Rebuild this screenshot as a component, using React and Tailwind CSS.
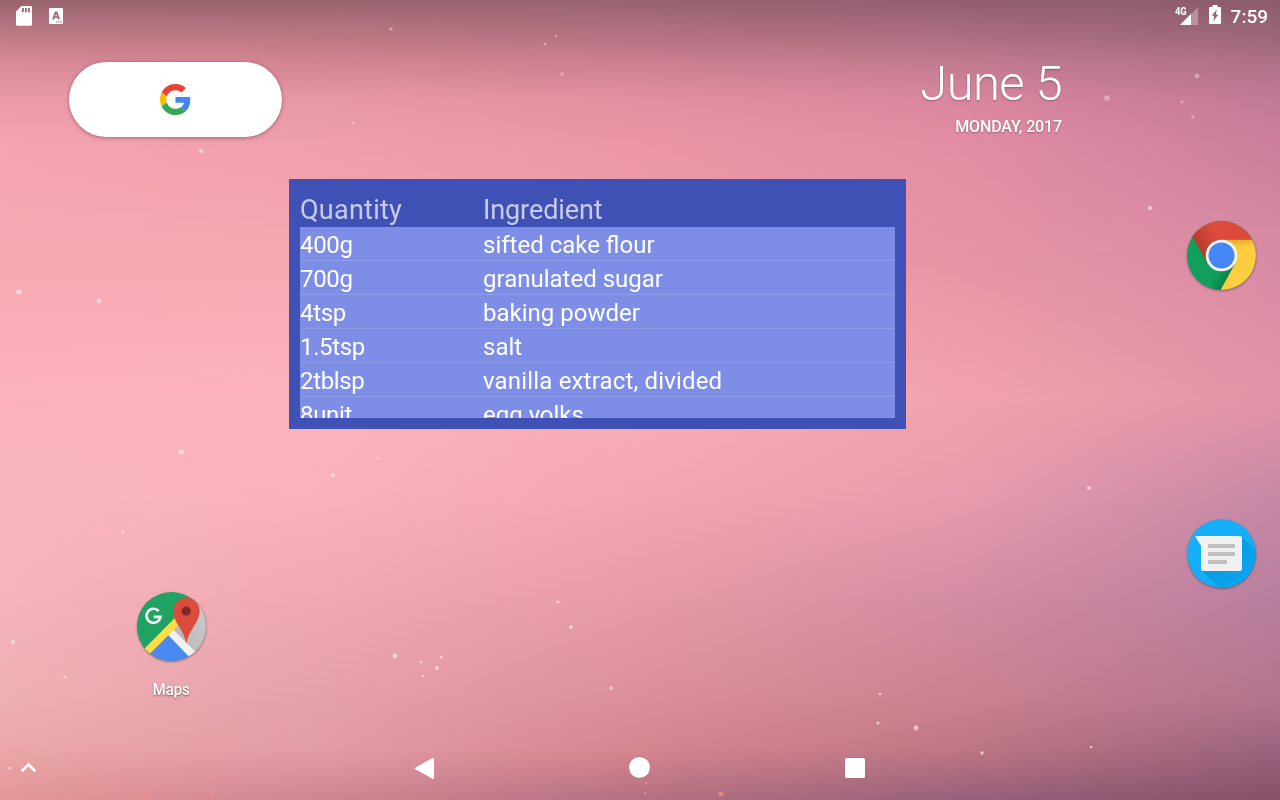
import React from "react";

/* Wallpaper colours: one entry per horizontal band, five stops across. */
const BANDS = [
  { y: 0, c: ["#98646f", "#99646f", "#97636f", "#935f6f", "#8b5c6c"] },
  { y: 32, c: ["#bb7884", "#b97581", "#b27080", "#aa6c7f", "#9a6578"] },
  { y: 64, c: ["#da8b98", "#d38691", "#cd8092", "#c37c90", "#b07189"] },
  { y: 100, c: ["#ec9aa8", "#e998a6", "#e48fa2", "#da879e", "#c27a97"] },
  { y: 150, c: ["#f6a4b0", "#f19fac", "#ec96a7", "#e38ea4", "#cc809d"] },
  { y: 250, c: ["#f8a9b2", "#f7a8b1", "#f09eab", "#e893a6", "#d78ba4"] },
  { y: 400, c: ["#fbb2bb", "#fcb4bc", "#f9aeb6", "#f3a2ad", "#e393a8"] },
  { y: 500, c: ["#fab6bf", "#f9b1ba", "#f3a6b1", "#e89bad", "#c588a5"] },
  { y: 600, c: ["#f5b3bb", "#f0a8b1", "#e79ba7", "#d48ca2", "#b87f9e"] },
  { y: 700, c: ["#eeb0b2", "#e6a0a8", "#da8f9a", "#cb8190", "#b2748d"] },
  { y: 750, c: ["#eba7a9", "#e39ca4", "#d5868f", "#bf7685", "#9a637d"] },
  { y: 800, c: ["#e39798", "#cf8591", "#b46f82", "#96607a", "#865068"] },
];

const STARS = [
  [391, 29, 1.8], [545, 44, 1.6], [556, 36, 1.3], [353, 123, 1.6], [201, 151, 2], [1107, 98, 2.8],
  [1197, 76, 2.4], [1182, 102, 1.6], [1193, 117, 1.8], [1150, 208, 2], [19, 292, 2.8], [99, 301, 2.4],
  [181, 452, 2.8], [333, 475, 2], [378, 458, 1.3], [1089, 488, 2], [123, 532, 1.6], [571, 627, 2],
  [395, 656, 2.4], [437, 668, 2], [441, 657, 1.6], [421, 662, 1.5], [13, 642, 2], [878, 723, 1.6],
  [916, 728, 2.4], [982, 753, 1.8], [10, 768, 1.6], [611, 688, 1.8], [558, 602, 1.6], [1091, 747, 1.3],
  [880, 694, 1.3], [65, 677, 1.6], [562, 74, 1.8], [423, 676, 1.3],
];
const EMBERS = [[721, 794, 2.6], [144, 798, 2], [212, 795, 2], [646, 783, 1.3], [645, 793, 1.3]];

function Wallpaper() {
  return (
    <svg className="absolute inset-0" width="1280" height="800" viewBox="0 0 1280 800" aria-hidden="true">
      <defs>
        {BANDS.map((b, i) => (
          <linearGradient key={i} id={`band${i}`} x1="0" x2="1" y1="0" y2="0">
            {b.c.map((c, j) => <stop key={j} offset={j / 4} stopColor={c} />)}
          </linearGradient>
        ))}
        {BANDS.slice(1).map((b, i) => (
          <React.Fragment key={i}>
            <linearGradient id={`fade${i + 1}`} gradientUnits="userSpaceOnUse" x1="0" x2="0" y1={BANDS[i].y} y2={b.y}>
              <stop offset="0" stopColor="#fff" stopOpacity="0" />
              <stop offset="1" stopColor="#fff" />
            </linearGradient>
            <mask id={`mask${i + 1}`} maskUnits="userSpaceOnUse" x="0" y="0" width="1280" height="800">
              <rect width="1280" height="800" fill={`url(#fade${i + 1})`} />
            </mask>
          </React.Fragment>
        ))}
        <filter id="glow"><feGaussianBlur stdDeviation="0.7" /></filter>
      </defs>
      <rect width="1280" height="800" fill="url(#band0)" />
      {BANDS.slice(1).map((b, i) => (
        <rect key={i} width="1280" height="800" fill={`url(#band${i + 1})`} mask={`url(#mask${i + 1})`} />
      ))}
      <g filter="url(#glow)">
        {STARS.map(([x, y, r], i) => <circle key={i} cx={x} cy={y} r={r} fill="#ffe8ee" opacity={y < 130 ? 0.4 : 0.68} />)}
        {EMBERS.map(([x, y, r], i) => <circle key={i} cx={x} cy={y} r={r} fill="#f58f88" opacity="0.75" />)}
      </g>
    </svg>
  );
}

function GoogleG({ className }) {
  return (
    <svg className={className} viewBox="0 0 48 48" aria-hidden="true">
      <path fill="#EA4335" d="M24 9.5c3.54 0 6.71 1.22 9.21 3.6l6.85-6.85C35.9 2.38 30.47 0 24 0 14.62 0 6.51 5.38 2.56 13.22l7.98 6.19C12.43 13.72 17.74 9.5 24 9.5z" />
      <path fill="#4285F4" d="M46.98 24.55c0-1.57-.15-3.09-.38-4.55H24v9.02h12.94c-.58 2.96-2.26 5.48-4.78 7.18l7.73 6c4.51-4.18 7.09-10.36 7.09-17.65z" />
      <path fill="#FBBC05" d="M10.53 28.59c-.48-1.45-.76-2.99-.76-4.59s.27-3.14.76-4.59l-7.98-6.19C.92 16.46 0 20.12 0 24c0 3.88.92 7.54 2.56 10.78l7.97-6.19z" />
      <path fill="#34A853" d="M24 48c6.48 0 11.93-2.13 15.89-5.81l-7.73-6c-2.15 1.45-4.92 2.3-8.16 2.3-6.26 0-11.57-4.22-13.47-9.91l-7.98 6.19C6.51 42.62 14.62 48 24 48z" />
    </svg>
  );
}

const ICON_SHADOW = "h-[72px] w-[72px] drop-shadow-[0_1px_1px_rgba(0,0,0,0.35)]";

function ChromeIcon() {
  return (
    <svg className={ICON_SHADOW} viewBox="-36.500 -35.500 72 72" aria-label="Chrome">
      <defs>
        <clipPath id="chromeClip"><circle r="34.5" /></clipPath>
        <linearGradient id="chromeRed" gradientUnits="userSpaceOnUse" x1="-22" y1="-8" x2="-5" y2="-18">
          <stop offset="0" stopColor="#b83a2d" /><stop offset="1" stopColor="#db4a3b" />
        </linearGradient>
        <linearGradient id="chromeYellow" gradientUnits="userSpaceOnUse" x1="12" y1="-16" x2="13" y2="-7">
          <stop offset="0" stopColor="#e3ac2b" /><stop offset="1" stopColor="#ffcd40" />
        </linearGradient>
        <linearGradient id="chromeGreen" gradientUnits="userSpaceOnUse" x1="9" y1="19" x2="-3" y2="12">
          <stop offset="0" stopColor="#0b8048" /><stop offset="1" stopColor="#10a05c" />
        </linearGradient>
      </defs>
      <g clipPath="url(#chromeClip)">
        <rect x="-37" y="-37" width="74" height="74" fill="url(#chromeGreen)" />
        <path d="M0-16H37V37H-2.300L13.600 8Z" fill="url(#chromeYellow)" />
        <path d="M-37-33V-37H37V-16H0L-14 8Z" fill="url(#chromeRed)" />
      </g>
      <circle r="15.8" fill="#f4f4f4" />
      <circle r="13" fill="#4587f4" />
    </svg>
  );
}

function MessagesIcon() {
  return (
    <svg className={ICON_SHADOW} viewBox="-36.500 -35.500 72 72" aria-label="Messages">
      <defs>
        <clipPath id="msgClip"><circle r="34.5" /></clipPath>
        <linearGradient id="msgShade" gradientUnits="userSpaceOnUse" x1="0" y1="0" x2="26" y2="26">
          <stop offset="0" stopColor="#079be0" /><stop offset="1" stopColor="#0ba6f0" />
        </linearGradient>
      </defs>
      <g clipPath="url(#msgClip)">
        <circle r="34.5" fill="#15aef8" />
        <path d="M-20 16.8L0 37H36V-2L20-17Z" fill="url(#msgShade)" />
      </g>
      <path d="M-25.2-17.5H18.5a2 2 0 0 1 2 2V15.500a2 2 0 0 1-2 2H-18.500a2 2 0 0 1-2-2V-8L-26-16.200Q-26.500-17.500-25.200-17.500Z" fill="#f1f1f1" />
      <path d="M-13.500-9.500h27v4h-27zM-13.500-1.500h27v4h-27zM-13.500 6.500h19v4h-19z" fill="#c0c0c0" />
    </svg>
  );
}

function MapsIcon() {
  return (
    <svg className={ICON_SHADOW} viewBox="16.100 11.200 72 72" aria-label="Maps">
      <defs>
        <clipPath id="mapsClip"><circle cx="51.600" cy="46.700" r="34.500" /></clipPath>
        <linearGradient id="mapsGray" x1="0" y1="1" x2="1" y2="0">
          <stop offset="0" stopColor="#b0b0b0" /><stop offset="1" stopColor="#d0d0d0" />
        </linearGradient>
      </defs>
      <g clipPath="url(#mapsClip)">
        <rect x="10" y="8" width="80" height="80" fill="#1fa362" />
        <path d="M47 54L90 10V90Z" fill="url(#mapsGray)" />
        <path d="M47.500 55L74 82H22Z" fill="#4a89f3" />
        <path d="M47 54L52.500 49L82 78.500L74 82Z" fill="#f1f1f1" />
        <path d="M22 71.500L65 28L70 34L26 78Z" fill="#ffdc48" />
      </g>
      <path d="M66.400 64.500C65.500 52 53.200 43 53.200 31.300a13.300 13.300 0 0 1 26.600 0C79.800 43 67.300 52 66.400 64.500Z" fill="#db4c3f" />
      <circle cx="66.200" cy="31.300" r="4.600" fill="#7c2c27" />
      <path
        d="M38.900 31.300A7 7 0 1 0 40.600 37H33.700"
        fill="none"
        stroke="#f1f1f1"
        strokeWidth="2.700"
      />
    </svg>
  );
}

function StatusBar() {
  return (
    <header className="flex h-8 items-start justify-between pl-4 pr-3">
      <div className="flex gap-[17px] pt-1.5">
        <svg className="h-5 w-4" viewBox="0 0 16 20" aria-label="SD card">
          <path fillRule="evenodd" fill="#fff" d="M5.500 0H14.500A1.500 1.500 0 0 1 16 1.500V18.200A1.500 1.500 0 0 1 14.500 19.700H1.500A1.500 1.500 0 0 1 0 18.200V5.500ZM6 2V6.300H7.900V2ZM9 2V6.300H10.900V2ZM12 2V6.300H13.900V2Z" />
        </svg>
        <svg className="mt-0.5 h-4 w-3.5" viewBox="0 0 14 16" aria-label="Keyboard">
          <path fillRule="evenodd" fill="#fff" d="M1 0H13a1 1 0 0 1 1 1V15a1 1 0 0 1-1 1H1a1 1 0 0 1-1-1V1a1 1 0 0 1 1-1ZM5.900 3.500L3 11.500H5.200L5.700 10H8.500L9 11.500H11.200L8.300 3.500ZM7.100 5.700L7.900 8.300H6.300ZM7.200 13.300v1.300h1.300v-1.300ZM9.300 13.300v1.300h1.300v-1.300ZM11.400 13.300v1.300h1.300v-1.300Z" />
        </svg>
      </div>
      <div className="flex">
        <span className="mt-[6px] inline-block w-[11px] origin-left scale-x-[0.85] text-[11px] font-bold leading-3">4G</span>
        <svg className="-ml-[6px] mt-[7px] h-[18px] w-[18px]" viewBox="0 0 18 18" aria-label="Signal">
          <path d="M18 0V18H0Z" fill="#fff" opacity=".3" />
          <path d="M11 7V18H0Z" fill="#fff" />
        </svg>
        <svg className="ml-[11px] mt-[5px] h-[19px] w-3" viewBox="0 0 12 19" aria-label="Battery charging">
          <path fillRule="evenodd" fill="#fff" d="M3.500 0H8.500V2H11A1 1 0 0 1 12 3V18A1 1 0 0 1 11 19H1A1 1 0 0 1 0 18V3A1 1 0 0 1 1 2H3.500ZM7.800 4.600L2.700 10.800H5.200L4.300 16.200L9.300 9.500H6.800Z" />
        </svg>
        <span className="ml-[10px] mt-[5px] text-[19px] font-medium leading-[23px]">7:59</span>
      </div>
    </header>
  );
}

const INGREDIENTS = [
  ["400g", "sifted cake flour"],
  ["700g", "granulated sugar"],
  ["4tsp", "baking powder"],
  ["1.5tsp", "salt"],
  ["2tblsp", "vanilla extract, divided"],
  ["8unit", "egg yolks"],
];

function IngredientsWidget() {
  return (
    <section className="ml-[289px] flex h-[250px] w-[617px] shrink-0 flex-col bg-[#3f51b5] p-[11px]">
      <div className="grid h-[37px] shrink-0 grid-cols-[183px_1fr] pt-[3px] text-[27px] leading-[34px] text-white/70">
        <span className="tracking-[0.25px]">Quantity</span>
        <span className="tracking-[-0.1px]">Ingredient</span>
      </div>
      <ul className="h-[191px] overflow-hidden bg-[#7e8ee6] text-2xl">
        {INGREDIENTS.map(([quantity, name]) => (
          <li key={name} className="grid h-[34px] grid-cols-[183px_1fr] border-b border-[#8f9de9] pt-[2px] leading-[33px]">
            <span className="tracking-[-0.35px]">{quantity}</span>
            <span className={name.startsWith("vanilla") ? "tracking-[0.17px]" : undefined}>{name}</span>
          </li>
        ))}
      </ul>
    </section>
  );
}

function NavBar() {
  return (
    <nav className="flex h-16 shrink-0 items-center pl-[20px]">
      <svg className="mb-px h-4 w-[18px]" viewBox="0 0 18 16" aria-label="All apps">
        <path d="M2.500 10.500L8.500 4.500L14.500 10.500" fill="none" stroke="#fff" strokeWidth="2.700" strokeLinecap="round" />
      </svg>
      <svg className="ml-[376px] h-6 w-[22px]" viewBox="0 0 22 24" aria-label="Back">
        <path d="M2 12.300L19 3V22Z" fill="#fff" stroke="#fff" strokeWidth="2" strokeLinejoin="round" />
      </svg>
      <span className="mb-px ml-[193px] h-[21px] w-[21px] rounded-full bg-white shadow-[0_0_1px_rgba(0,0,0,0.3)]" />
      <span className="ml-[194.500px] h-5 w-5 rounded-[1.5px] bg-white shadow-[0_0_1px_rgba(0,0,0,0.3)]" />
    </nav>
  );
}

export default function App() {
  return (
    <div className="relative h-[800px] w-[1280px] overflow-hidden font-['Roboto',sans-serif] text-white">
      <Wallpaper />
      <div className="relative flex h-full flex-col">
        <StatusBar />
        <main className="flex min-h-0 flex-1">
          <div className="flex w-[1185px] flex-col">
            <div className="flex h-[147px] shrink-0 items-start justify-between pl-[69px] pr-[123px] pt-[30px]">
              <div className="flex h-[75px] w-[213px] items-center justify-center rounded-full bg-white shadow-[0_1px_4px_rgba(0,0,0,0.35)]">
                <GoogleG className="h-[31px] w-[31px]" />
              </div>
              <div className="flex flex-col items-end [text-shadow:0_1px_2px_rgba(0,0,0,0.3)]">
                <span className="-mt-[7px] text-[49px] font-light leading-[58px] tracking-[-0.6px]">June 5</span>
                <span className="mt-1 text-base font-medium leading-5 tracking-[-0.13px]">MONDAY, 2017</span>
              </div>
            </div>
            <IngredientsWidget />
            <div className="ml-[135px] mt-[162px] flex w-[73px] flex-col items-center">
              <MapsIcon />
              <span className="mt-4 scale-x-[0.87] text-[17px] font-medium leading-5 [text-shadow:0_1px_2px_rgba(0,0,0,0.5)]">Maps</span>
            </div>
          </div>
          <aside className="flex flex-col gap-[226px] pt-[188px]">
            <ChromeIcon />
            <MessagesIcon />
          </aside>
        </main>
        <NavBar />
      </div>
    </div>
  );
}
